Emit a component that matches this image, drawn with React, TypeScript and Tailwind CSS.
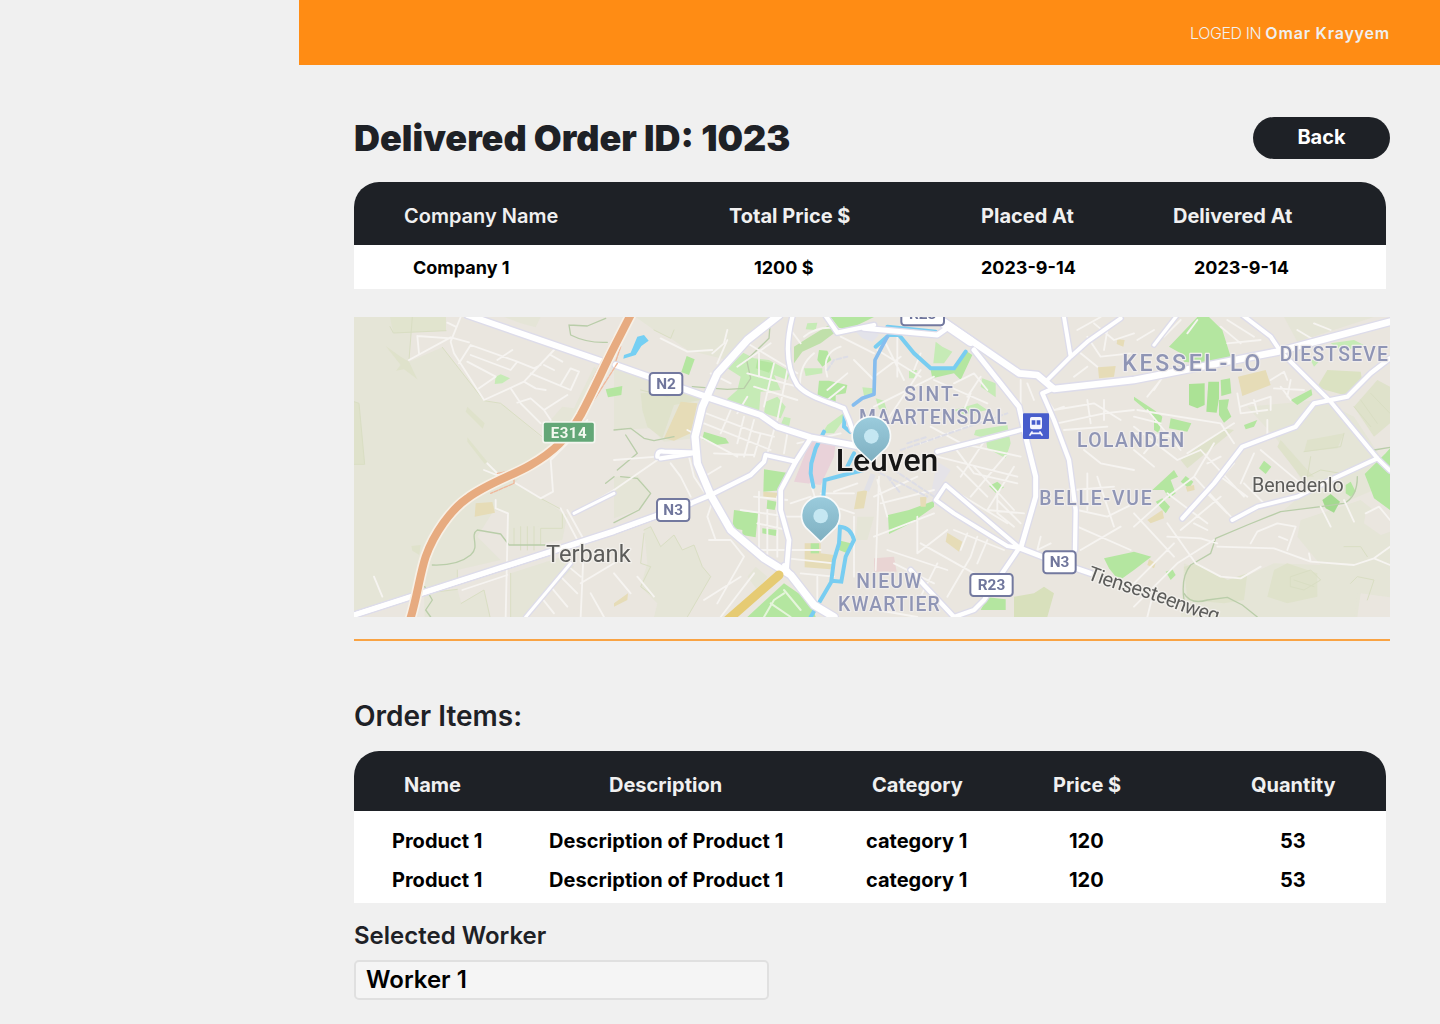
const INTER = "font-['Inter',sans-serif]";

/* Map geometry is expressed in thirds of a pixel; the view is 3108 x 900 units. */
type Shape = [fill: string, d: string];

const RURAL = "#e5e5d7";
const FIELD = "#dfe2cb";
const PARK = "#b4e6a0";
const PARK_SOFT = "#c6ebb6";
const SAND = "#e6dcb7";

const land: Shape[] = [
  [RURAL, "M0 21H175L165 155 265 112 390 272 450 285 570 390 600 410 480 520 560 565 615 600 625 655 560 650 560 705 460 705 460 610 420 600 370 680 440 750 310 780 310 820 200 860 0 915Z"],
  ["#e1e4ce", "M108 21H276V62L118 69Z"],
  [FIELD, "M0 275L15 280 32 463H0Z"],
  [FIELD, "M95 108L140 140 165 155 190 208 150 178 126 182 140 165Z"],
  [FIELD, "M340 290L392 340 386 356 335 305Z"],
  [FIELD, "M340 382L400 455 392 462 340 395Z"],
  [FIELD, "M172 708L200 705 196 735 175 722Z"],
  [RURAL, "M560 575L640 615 625 690 560 700 465 705 470 655 560 650Z"],
  [RURAL, "M210 850L310 838 322 880 390 840 408 921H212Z"],
  [RURAL, "M470 790L640 735 660 770 510 921H470Z"],
  [RURAL, "M720 170L745 190 690 320 640 350 560 400 590 330 625 290 660 295Z"],
  [RURAL, "M450 21H560L545 52 500 40Z"],
  [RURAL, "M780 150L890 195 1020 240 1060 290 1020 385 930 395 890 355 780 360Z"],
  [FIELD, "M860 250L1025 240 1040 270 960 285 925 385 880 350 865 300Z"],
  [RURAL, "M845 21H1250L1180 100 1120 150 1000 120 950 85 900 60Z"],
  [RURAL, "M870 660L890 650 920 710 960 675 985 720 1020 705 1045 770 1070 800 1000 921H900L910 880 860 830 880 760Z"],
  [RURAL, "M780 500L850 495 890 550 850 600 780 625Z"],
  [RURAL, "M2680 290L2900 270 3000 320 3080 440 3108 480V520L2940 590 2790 600 2860 540 2800 440 2770 390Z"],
  [RURAL, "M2840 630L3020 570 3108 640V921H2480L2490 760 2540 780 2640 815 2760 760 2900 765 2830 680Z"],
  [FIELD, "M2490 770L2530 760 2620 810 2680 790 2670 870 2610 880 2500 870Z"],
  [FIELD, "M2760 780L2800 760 2890 790 2890 860 2800 880 2740 860Z"],
  [FIELD, "M3000 290L3070 210 3108 230V340L3060 380Z"],
  [FIELD, "M2780 390L2860 480 2880 500 2840 500 2770 410Z"],
  [FIELD, "M2860 390L2970 370 2950 415 2850 425Z"],
  [RURAL, "M2790 21H3060L2830 95Z"],
  [FIELD, "M2480 450L2610 355 2640 360 2500 475Z"],
  ["#d8e0bc", "M1980 860L2040 850 2070 830 2100 850 2080 921H1980Z"],
  ["#dbe2c2", "M2890 230L2920 180 3020 185 3025 215 2970 255 2915 240Z"],
  [RURAL, "M3010 850L3108 860V921H3000Z"],
  ["#eae6df", "M3020 850L3108 862V921H3010Z"],
  ["#eae6df", "M2720 660L2780 635 2825 650 2800 720 2690 705Z"],
  ["#eae6df", "M3035 610L3075 590 3108 630V665L3080 675 3030 640Z"],
  [PARK_SOFT, "M425 200L440 193 468 205 445 220 422 222Z"],
  [SAND, "M365 580L415 576 423 608 362 620Z"],
  [PARK, "M755 238L805 228 802 255 762 262Z"],
  [PARK, "M998 138L1022 148 1005 195 982 186Z"],
  [SAND, "M980 275L1030 280 1010 370 960 392 930 385Z"],
  [PARK_SOFT, "M1168 128L1200 145 1245 150 1310 185 1300 210 1260 195 1280 240 1220 245 1215 310 1110 275 1150 240 1160 200 1120 175Z"],
  [PARK, "M1210 150L1260 160 1245 188 1205 175Z"],
  [PARK_SOFT, "M1235 275L1270 260 1295 290 1280 325 1230 310Z"],
  [PARK_SOFT, "M1290 320L1310 325 1305 350 1280 345Z"],
  [PARK, "M1050 365L1115 385 1125 400 1085 405 1045 388Z"],
  [PARK, "M1230 478L1298 488 1290 540 1228 545Z"],
  [SAND, "M1228 545L1270 548 1265 570 1228 562Z"],
  [PARK, "M1240 570L1268 575 1262 600 1238 596Z"],
  [PARK, "M1140 600L1212 610 1205 682 1165 675 1165 660 1135 655Z"],
  [PARK, "M1225 655L1270 660 1265 678 1225 670Z"],
  [PARK, "M1395 212L1425 212 1480 225 1475 250 1445 255 1445 277 1390 260Z"],
  [PARK, "M1395 120L1420 122 1432 150 1405 170 1390 150Z"],
  [PARK_SOFT, "M1350 175H1405V190L1355 198Z"],
  [PARK_SOFT, "M1360 40L1390 38 1385 60 1355 58Z"],
  [PARK, "M1430 21H1560L1500 50 1460 60Z"],
  ["#c0e0aa", "M1320 110L1360 85 1425 45 1460 55 1400 100 1345 125 1320 160Z"],
  ["#e9d2d9", "M1370 390L1445 400 1440 440 1400 525 1320 515Z"],
  [SAND, "M1352 700H1400V730L1440 735 1430 778 1352 772Z"],
  [PARK, "M1370 700H1395V730H1370Z"],
  [PARK, "M1460 692L1490 700 1480 730 1455 720Z"],
  [PARK, "M1180 921L1290 820 1370 875 1385 921Z"],
  [RURAL, "M1180 800L1205 770 1240 800 1210 840Z"],
  [SAND, "M1510 545L1540 540 1530 595 1500 598Z"],
  [RURAL, "M1510 620L1560 620 1540 690 1505 690Z"],
  [PARK_SOFT, "M1405 370L1420 345 1470 308 1480 315 1440 370Z"],
  [PARK_SOFT, "M1525 232L1558 235V255L1530 258Z"],
  [PARK_SOFT, "M1565 265L1590 272 1598 300 1575 298Z"],
  [PARK_SOFT, "M1745 95L1765 110 1795 125 1770 160 1738 160Z"],
  [PARK, "M1730 180L1800 178 1840 125 1855 135 1820 210 1800 190 1735 205Z"],
  [PARK_SOFT, "M1665 180L1690 180 1680 205 1665 205Z"],
  [PARK_SOFT, "M1885 205L1925 220 1925 262 1880 230Z"],
  [PARK_SOFT, "M1800 300L1870 280 1900 300 1830 315Z"],
  [PARK_SOFT, "M1865 360L1960 345 1970 400 1955 445 1900 415 1895 385 1860 375Z"],
  [PARK, "M1905 528L1930 515 1950 532 1925 548Z"],
  [PARK, "M1602 615L1665 600 1740 572 1740 590 1670 640 1605 672Z"],
  [SAND, "M1780 668L1825 695 1815 725 1775 695Z"],
  [SAND, "M1698 562L1718 560 1715 590 1700 590Z"],
  ["#e9d4d3", "M1560 745L1620 740 1628 785 1560 785Z"],
  [PARK, "M1900 862L1955 868 1955 900 1880 900Z"],
  [SAND, "M2232 172L2285 168 2280 200 2235 205Z"],
  [SAND, "M2290 88L2312 90 2308 110 2288 102Z"],
  [PARK, "M2250 745L2340 725 2392 740 2340 780 2295 812 2265 775Z"],
  [PARK, "M2445 110L2530 21H2565L2605 60 2630 140 2570 165 2490 155 2480 130Z"],
  ["#abe295", "M2505 222L2552 220V285L2530 295 2505 285Z"],
  ["#abe295", "M2563 215L2595 215V265L2588 308 2557 305Z"],
  ["#b0e49c", "M2600 210L2628 205 2632 250 2602 258Z"],
  ["#b0e49c", "M2595 270L2625 268 2620 295 2632 320 2610 338 2595 315Z"],
  [SAND, "M2652 200L2735 180 2750 225 2665 258Z"],
  [PARK, "M2340 260L2400 300 2425 320 2415 370 2400 360 2400 320 2340 270Z"],
  [PARK, "M2450 325L2512 340 2500 365 2445 355Z"],
  [PARK, "M2810 270L2872 238 2875 255 2830 285Z"],
  [PARK, "M2670 345L2710 330 2700 350 2675 358Z"],
  [PARK, "M2395 540L2460 480 2472 500 2450 510 2465 550 2445 565 2430 540Z"],
  [PARK, "M2480 515L2495 498 2518 515 2505 535Z"],
  [SAND, "M2495 530L2520 525 2522 540 2500 545Z"],
  [PARK, "M2405 575L2425 565 2448 590 2435 610Z"],
  [SAND, "M2380 630L2425 600 2430 625 2390 640Z"],
  [PARK, "M2715 475L2730 452 2752 470 2735 492Z"],
  ["#a2da8e", "M2905 570L2930 552 2958 575 2940 608 2915 595Z"],
  [PARK, "M2975 525L2990 515 3005 545 2990 560 2975 550Z"],
  [PARK, "M3032 492L3095 430 3108 415V600L3060 565 3045 525Z"],
  [PARK, "M2435 785L2455 778 2465 795 2450 810Z"],
  [SAND, "M2385 748L2405 760 2400 775 2380 765Z"],
  [PARK_SOFT, "M2870 150L2900 150 2880 170Z"],
  [PARK_SOFT, "M2930 100L3000 90 3040 110 2960 120Z"],
  ["#e5e3e8", "M1750 455L1790 480 1765 520 1745 560 1732 545Z"],
  ["#e3e3ea", "M1500 60L1545 55 1575 75 1555 95 1525 85Z"],
  ["#e1e1e6", "M1530 540L1550 490 1565 495 1545 545Z"],
  [SAND, "M780 880L822 850 820 870 780 890Z"],
];

/* Thin residential streets, grouped by district. */
const lanes = [
  "M165 150L290 82 345 97M190 78L195 130M190 78L290 85M320 21L290 95 300 130 390 270 510 215 600 120M315 160L350 105 490 155 470 180 350 135M490 155L540 175 560 165M340 155L425 200 375 235M430 150L475 120M510 215L545 235 575 240M530 190L650 240 675 185 650 175 620 225M570 165L600 180M590 135L625 155M470 235L500 280 560 340M490 278L530 265 570 300 640 255M570 300L590 330M280 38L305 50M400 460L435 495M425 570V595L462 610 460 700 455 921M325 840L460 795M485 520L560 565 597 545 590 450 640 400 700 330M620 595L670 690M640 600L690 690M660 610L780 540M60 800L85 860M690 700L680 921M560 860L600 910M590 830L640 890M620 800L670 850M650 775L680 800M680 820L780 760M710 850L750 921M390 480L440 500",
  "M920 85L1000 125 1075 120M1090 160L1120 90M1070 190L1130 220M1075 130L1110 100 1120 60M1150 170L1250 100M1180 100L1330 190M1180 190L1330 230M1200 230L1330 270M1215 130V200M1260 160L1230 290M1300 180L1270 330M1180 260L1150 310M1030 300L1200 365 1260 380M1060 270L1040 340M1130 300L1100 370M1170 320L1150 400M1200 330L1170 440M1050 340L1250 420M1000 360L1150 440M1220 370L1200 440M1260 360L1240 430M1300 370L1290 430M1080 430L1200 435M1050 500L1100 470M1085 690L1060 620 1080 560M1065 690H1130L1170 740 1090 880M1000 420L1020 500 1050 545M780 540L910 450M920 440L1020 430M780 450L910 440M950 460L980 500 1010 560M1160 600L1300 620M1200 560L1300 570M1210 640L1300 660M1215 545V740M1240 600V740M1270 560V740M1220 720H1400M1300 620H1380M1300 745L1440 760M1310 580L1370 560M1340 790L1440 800M1390 800V880M1370 520L1400 620M1440 545L1510 520M1400 550H1500M1440 590L1500 610M1330 400L1460 370M1350 80Q1400 40 1470 60M1340 240Q1330 170 1380 130M1460 110Q1400 130 1420 200M1480 190L1420 240M1500 150L1560 210M1460 80L1560 130M1420 270L1470 230M1310 60L1340 100M780 790L830 850M850 800L900 860M1100 921L1200 790M1050 870L1160 800",
  "M1560 200L1640 140M1570 120L1700 200M1590 90L1650 210M1630 80V200M1560 290L1680 230M1600 330L1700 180M1660 240L1740 200M1700 130L1680 180M1740 210L1900 280M1800 220L1860 190 1900 240M1850 250L1830 300M1880 200L1840 260M1700 400L1920 320M1730 350L1840 410M1750 440L1990 500M1800 410L1860 490 1990 520M1820 400L2000 440M1900 380L1820 500M1960 430L1850 560M1980 470L1900 600M1780 530L1960 640M1860 470L1980 600M1930 550V610L1980 650M1810 470L1900 560M2000 640L1930 570M1900 600L2010 610M1560 560L1690 500M1580 580L1740 540M1570 510L1600 620M1560 680L1740 610M1575 500L1565 780M1500 620V800M1690 620V730L1780 660M1600 720L1780 780M1700 700L1860 790M1800 660L1950 720M1840 670L1820 720M1870 680L1850 740M1900 690L1870 760M1750 760L1700 860M1620 760L1740 820M1850 740L1780 860M2000 210V290M2020 220L2040 270M1570 900L1690 921M2060 680L2050 720 2090 700M2170 600L2260 620 2340 580M2170 650L2330 720M2200 490V600M2230 500L2280 650M2160 540L2280 530M2180 720L2300 650M2100 300L2220 280 2300 330M2110 340L2250 310 2340 300M2200 270L2210 340M2250 270V330M2130 360L2260 350M2190 420L2240 460 2340 480M2160 200L2200 170M2170 60L2240 21M2200 80L2240 140 2330 130M2220 40L2280 90 2340 70M2180 130L2230 170M2260 60L2250 120M2080 270L2100 300 2130 290",
  "M2340 320L2420 340M2340 370L2460 380M2340 420L2400 470M2350 300L2600 340 2640 400M2420 210L2380 260M2440 180L2400 240M2340 350L2470 450 2540 420M2380 300L2480 420M2420 370L2370 430M2500 430L2640 340M2540 420L2670 560M2580 400L2520 500 2640 630M2560 460L2600 440M2640 460L2560 550 2620 610M2600 500L2680 560M2670 520L2730 580M2700 430L2660 520M2720 420L2840 520M2740 330V390M2650 250L2660 310 2740 300M2660 290L2750 260V300M2700 270L2710 310M2750 210L2790 185 2800 210M2760 235L2850 240M2780 230L2810 270M2810 210L2800 260M2620 100L2720 90M2600 50L2660 100M2620 30L2700 80M2500 70L2530 30M2430 80L2480 30M2350 90L2400 60M2440 680L2540 685 2590 700M2440 640L2525 760M2580 690L2470 760 2340 890M2525 760L2600 800 2660 805 2720 770M2590 710L2760 715 2870 755 3000 765 3060 745 3108 710M2690 700L2710 665 2770 640 2825 650 2800 720M2775 680L2800 690M2870 755L2865 730M2340 610L2460 740M2340 650L2440 560 2520 500M2480 660L2600 560M2520 640L2560 660M3060 745L3108 765M2900 590L2930 650M2970 570L3000 635M3035 610L3075 590 3108 630M2400 840L2380 921M2340 820L2460 700M2440 550L2560 640M2880 40L2930 60M2830 60L2880 90",
];

const fieldLines =
  "M108 50L118 69 276 62M0 275L15 280 32 463H0M265 112L390 272 440 280 570 385M560 565L625 600V655H560V705M480 705V655M500 650V720M520 650V720M540 650V720M310 780V820M212 850L310 838M322 880L390 840 408 921M470 790V921M175 21L165 150M870 660L890 650 920 710 960 675 985 720 1020 705 1045 770 1070 800 1000 921M870 670L860 760 890 770 860 830 900 860M860 240L940 260 1010 240M900 60L950 85 960 60M2850 425L2960 410 2970 370M2860 500L2900 480 2960 490M2870 440L2860 500M3000 290L3050 350M3020 270L3070 340M3050 250L3108 310M2970 710L3020 710 3040 740M2810 800L2870 780 2900 810 2850 840 2810 830ZM2820 810L2880 830M2990 820L3010 800 3060 810 3040 870";
const trails =
  "M235 765Q310 768 350 735C380 710 345 675 370 660L440 672 465 705H580M645 45L650 75Q700 100 760 97M645 45L700 48 755 25M212 830L235 870 215 900 230 921M780 360L830 355 870 385 900 392 960 380M815 375L850 430 790 480M800 500L850 505 890 550 855 600 780 638M1015 230L1120 238 1170 235 1190 205 1178 150 1245 85 1250 21M2490 870Q2480 800 2510 765L2570 730 2585 685 2680 645 2780 605 2900 590 2970 580Q3010 560 3010 500M2490 850Q2510 885 2560 870L2620 862 2665 885 2710 921M3060 420L3108 412M755 520L780 500";

const water =
  "M1410 365L1385 415 1372 460 1370 490 1378 530M1472 318L1470 350 1488 365M1500 430L1480 470M1530 480L1480 492 1412 510 1408 560M1565 110L1605 75 1635 75 1680 130 1730 175H1800L1835 125M1600 50L1745 65M1458 650Q1490 652 1500 690L1475 740 1462 815 1432 812 1440 750 1455 700ZM1432 815L1400 870 1370 921";

const mainRoads: [number, string][] = [
  [13, "M910 440Q910 420 930 425L1030 428M920 445L1030 428"],
  [13, "M1410 10L1450 68 1560 45M1315 21C1295 100 1295 170 1330 225 1360 260 1420 275 1470 295L1485 330 1495 360"],
  [14, "M1370 385L1325 455 1280 540V600L1305 690 1298 775"],
  [13, "M1070 555L1190 495 1230 455 1235 435 1325 455"],
  [14, "M0 915L780 665 900 620 1010 580 1070 555"],
  [16, "M1 915L660 702 780 663 1010 580"],
  [9, "M515 921L650 760M660 610L700 590 780 550"],
  [18, "M340 15L745 155M785 165L870 195 1070 265 1220 315 1270 350 1370 382 1510 408"],
  [22, "M1275 15L1180 90 1090 190 1045 290 1023 380 1030 460 1070 555 1130 660 1230 745 1310 795 1380 885 1440 921"],
  [12, "M1290 765L1370 870"],
  [13, "M1670 780L1710 825 1800 921 1860 900 1890 870 1995 715"],
  [15, "M1530 55L1750 75 1785 50"],
  [26, "M1770 40L1850 95"],
  [20, "M1770 35L1995 190 2050 195 2100 237 2340 210 2770 125 3108 35"],
  [15, "M1860 120L1995 290 2020 400 2045 500V560L2000 715"],
  [13, "M1750 425L2000 360"],
  [13, "M2100 235L2065 250 2100 330 2145 450 2165 600 2163 720"],
  [12, "M2075 215L2150 140 2200 95 2300 25M2130 21L2150 140"],
  [12, "M1775 525L1995 712M1775 525L1745 570 1800 610 1960 708 2000 715"],
  [15, "M2000 715L2070 742 2210 790"],
  [12, "M2665 15L2750 80 2780 125 2930 275 3070 445 3108 482"],
  [13, "M3108 145L3050 190 2980 260 2880 280 2825 350 2665 410 2580 520 2485 625"],
  [12, "M3070 445L2940 505 2830 560 2710 590 2635 630"],
  [10, "M2400 105L2470 15"],
];

const highway = "M168 930C190 860 198 790 215 740 240 670 290 600 340 565 400 520 480 495 530 465 600 425 640 385 680 315 720 240 750 170 780 112L835 5";

const shields = [
  { x: 885, y: 187, w: 102, label: "N2" },
  { x: 907, y: 565, w: 101, label: "N3" },
  { x: 1640, y: -22, w: 132, label: "R23" },
  { x: 1847, y: 790, w: 131, label: "R23" },
  { x: 2066, y: 722, w: 101, label: "N3" },
];

const places = [
  { x: 1651, y: 272, w: 164, size: 58, text: "SINT-" },
  { x: 1515, y: 341, w: 443, size: 58, text: "MAARTENSDAL" },
  { x: 2305, y: 184, w: 414, size: 69, text: "KESSEL-LO" },
  { x: 2777, y: 153, w: 325, size: 58, text: "DIESTSEVE" },
  { x: 2169, y: 411, w: 322, size: 58, text: "LOLANDEN" },
  { x: 2056, y: 584, w: 337, size: 58, text: "BELLE-VUE" },
  { x: 1507, y: 833, w: 195, size: 58, text: "NIEUW" },
  { x: 1452, y: 902, w: 305, size: 58, text: "KWARTIER" },
];

function Pin({ x, y }: { x: number; y: number }) {
  return (
    <g transform={`translate(${x} ${y})`}>
      <path
        d="M0 74L-42 34A55 55 0 1 1 42 34Z"
        fill="url(#pin)"
        stroke="#f8fafa"
        strokeWidth="10"
        paintOrder="stroke"
        strokeLinejoin="round"
      />
      <circle r="22" fill="#c5e7f2" />
    </g>
  );
}

function DeliveryMap() {
  return (
    <svg viewBox="0 21 3108 900" className="block h-[300px] w-[1036px]" role="img" aria-label="Delivery map">
      <defs>
        <linearGradient id="pin" x1="0" y1="0" x2="0" y2="1">
          <stop offset="0" stopColor="#9acbdc" />
          <stop offset="1" stopColor="#7fb0c1" />
        </linearGradient>
        <filter id="soft" x="0" y="0" width="1" height="1">
          <feGaussianBlur stdDeviation="2" />
        </filter>
        <path id="steenweg" d="M2197 806C2290 843 2370 858 2440 887S2540 922 2700 970" />
      </defs>
      <rect y="21" width="3108" height="900" fill="#eae6df" />
      <g filter="url(#soft)" strokeLinecap="round" strokeLinejoin="round" fill="none">
        <rect y="21" width="3108" height="900" fill="#eae6df" />
        {land.map(([fill, d], i) => (
          <path key={i} d={d} fill={fill} />
        ))}
        <path d={fieldLines} stroke="#d9dec3" strokeWidth="3" />
        <path d={trails} stroke="#b9cda9" strokeWidth="4" />
        {lanes.map((d, i) => (
          <path key={i} d={d} stroke="#f6f4f1" strokeWidth="5.5" />
        ))}
        <path
          d="M1640 420L1960 310M1620 480L1740 560M1560 480L1720 560M1600 500L1640 550M1660 400L1720 380M1420 180L1440 150 1480 140"
          stroke="#dddde6"
          strokeWidth="6"
          strokeDasharray="14 8"
        />
        <path d={water} stroke="#78cdf1" strokeWidth="12" strokeLinejoin="miter" />
        <path d="M1600 80L1563 150 1560 253 1525 265 1498 285" stroke="#86bdee" strokeWidth="11" />
        <path d="M850 80L870 75 884 92 862 108 845 135 808 146 810 135 830 128Z" fill="#74cff3" />
        {mainRoads.map(([w, d], i) => (
          <path key={i} d={d} stroke="#dddcea" strokeWidth={w + 8} />
        ))}
        {mainRoads.map(([w, d], i) => (
          <path key={i} d={d} stroke="#fff" strokeWidth={w} />
        ))}
        <path d="M430 490L480 480 480 520 410 550M780 80L715 210M790 160L720 270M800 110L785 155" stroke="#efb79a" strokeWidth="4" strokeDasharray="12 4" />
        <path d={highway} stroke="#f7f0e6" strokeWidth="34" />
        <path d={highway} stroke="#e7ab80" strokeWidth="24" />
        <path d="M1115 935L1275 795" stroke="#e6cb73" strokeWidth="27" />
        <path d="M1230 921L1260 870 1290 850M1250 880L1310 921M1290 840L1340 900" stroke="#e6f5dc" strokeWidth="6" />

        <g fontFamily="Roboto, sans-serif">
          <rect x="567" y="336" width="155" height="62" rx="7" fill="#63a777" stroke="#f4f6f0" strokeWidth="5" />
          <text x="590" y="384" fontSize="45" fontWeight="700" textLength="108" fill="#f2f8ee">E314</text>
          {shields.map((s, i) => (
            <g key={i}>
              <rect x={s.x + 2} y={s.y + 2} width={s.w - 4} height="66" rx="10" fill="#fff" stroke="#73799f" strokeWidth="6" />
              <text x={s.x + s.w / 2} y={s.y + 50} fontSize="46" fontWeight="700" textAnchor="middle" fill="#70769c">
                {s.label}
              </text>
            </g>
          ))}
          <g fill="#8f95b5" stroke="#f0edec" strokeWidth="7" paintOrder="stroke" fontWeight="500">
            {places.map((p) => (
              <text key={p.text} x={p.x} y={p.y} fontSize={p.size} textLength={p.w}>
                {p.text}
              </text>
            ))}
          </g>
          <g fill="#5c5c5a" stroke="#f2f0ec" strokeWidth="8" paintOrder="stroke">
            <text x="576" y="755" fontSize="71" textLength="254">Terbank</text>
            <text x="2694" y="547" fontSize="59" textLength="275">Benedenlo</text>
            <text fontSize="60">
              <textPath href="#steenweg" textLength="415">Tiensesteenweg</textPath>
            </text>
          </g>
          <text x="1445" y="484" fontSize="96" fontWeight="500" textLength="308" fill="#171717" stroke="#f0edea" strokeWidth="9" paintOrder="stroke">
            Leuven
          </text>
        </g>
        <rect x="2007" y="310" width="78" height="77" rx="3" fill="#465dcc" />
        <path fillRule="evenodd" d="M2033 321H2059Q2064 321 2064 326V352Q2064 358 2058 358H2034Q2028 358 2028 352V326Q2028 321 2033 321ZM2033 331V344H2044V331ZM2048 331V344H2059V331Z" fill="#f5f6ff" />
        <path d="M2034 366L2028 375M2058 366L2064 375M2032 370H2060" stroke="#f5f6ff" strokeWidth="5" />
        <Pin x={1400} y={618} />
        <Pin x={1552} y={379} />
      </g>
    </svg>
  );
}

function ProductRow() {
  return (
    <div className="grid h-[39px] grid-cols-[157px_317px_203px_211px_1fr] items-center pl-[38px] text-xl font-bold text-black">
      <span>Product 1</span>
      <span className="tracking-[0.05px]">Description of Product 1</span>
      <span>category 1</span>
      <span>120</span>
      <span>53</span>
    </div>
  );
}

export default function App() {
  return (
    <div className={`flex h-[1024px] w-[1440px] overflow-hidden bg-[#f0f0f0] text-[#1e2126] ${INTER}`}>
      <aside className="w-[299px] shrink-0" />
      <div className="flex flex-1 flex-col">
        <header className="flex h-[65px] shrink-0 items-center justify-end gap-1 bg-[#ff8c14] pr-[50px] text-base text-[#f0f0f0]">
          <span className="font-light tracking-[-0.4px]">LOGED IN</span>
          <span className="font-semibold tracking-[0.8px]">Omar Krayyem</span>
        </header>

        <main className="flex flex-col pl-[55px] pr-[50px] pt-[52px]">
          <div className="flex h-[42px] items-center justify-between">
            <h1 className="whitespace-nowrap text-4xl font-black">Delivered Order ID: 1023</h1>
            <button className="h-[42px] w-[137px] rounded-full bg-[#1e2126] pb-0.5 text-xl font-bold text-white">Back</button>
          </div>

          <section className="mt-[23px] w-[1032px] overflow-hidden rounded-t-[25px] bg-white">
            <div className="grid h-[63px] grid-cols-[325px_252px_192px_1fr] items-center bg-[#1e2126] pl-[50px] pt-1 text-xl font-bold text-[#f0f0f0]">
              <span className="font-semibold">Company Name</span>
              <span>Total Price $</span>
              <span>Placed At</span>
              <span>Delivered At</span>
            </div>
            <div className="grid h-11 grid-cols-[341px_227px_213px_1fr] items-center pl-[59px] pt-0.5 text-lg font-[650] text-black">
              <span>Company 1</span>
              <span>1200 $</span>
              <span>2023-9-14</span>
              <span>2023-9-14</span>
            </div>
          </section>

          <div className="mt-7">
            <DeliveryMap />
          </div>
          <hr className="mt-[22px] h-0.5 border-0 bg-[#f9a343]" />

          <h2 className="mt-[55px] text-[28px] font-semibold leading-10">Order Items:</h2>

          <section className="mt-[15px] w-[1032px] overflow-hidden rounded-t-[25px] bg-white">
            <div className="grid h-[60px] grid-cols-[205px_263px_181px_198px_1fr] items-center bg-[#1e2126] pl-[50px] pt-2 text-xl font-bold text-[#f0f0f0]">
              <span>Name</span>
              <span>Description</span>
              <span>Category</span>
              <span>Price $</span>
              <span>Quantity</span>
            </div>
            <div className="h-[92px] pt-2.5">
              <ProductRow />
              <ProductRow />
            </div>
          </section>

          <label className="mt-[17px] text-2xl font-semibold leading-8">Selected Worker</label>
          <div className="mt-2 flex h-10 w-[415px] items-center rounded-[5px] border-2 border-[#e0e0e0] bg-[#f5f5f5] pl-2.5 text-2xl font-semibold text-black">
            Worker 1
          </div>
        </main>
      </div>
    </div>
  );
}
